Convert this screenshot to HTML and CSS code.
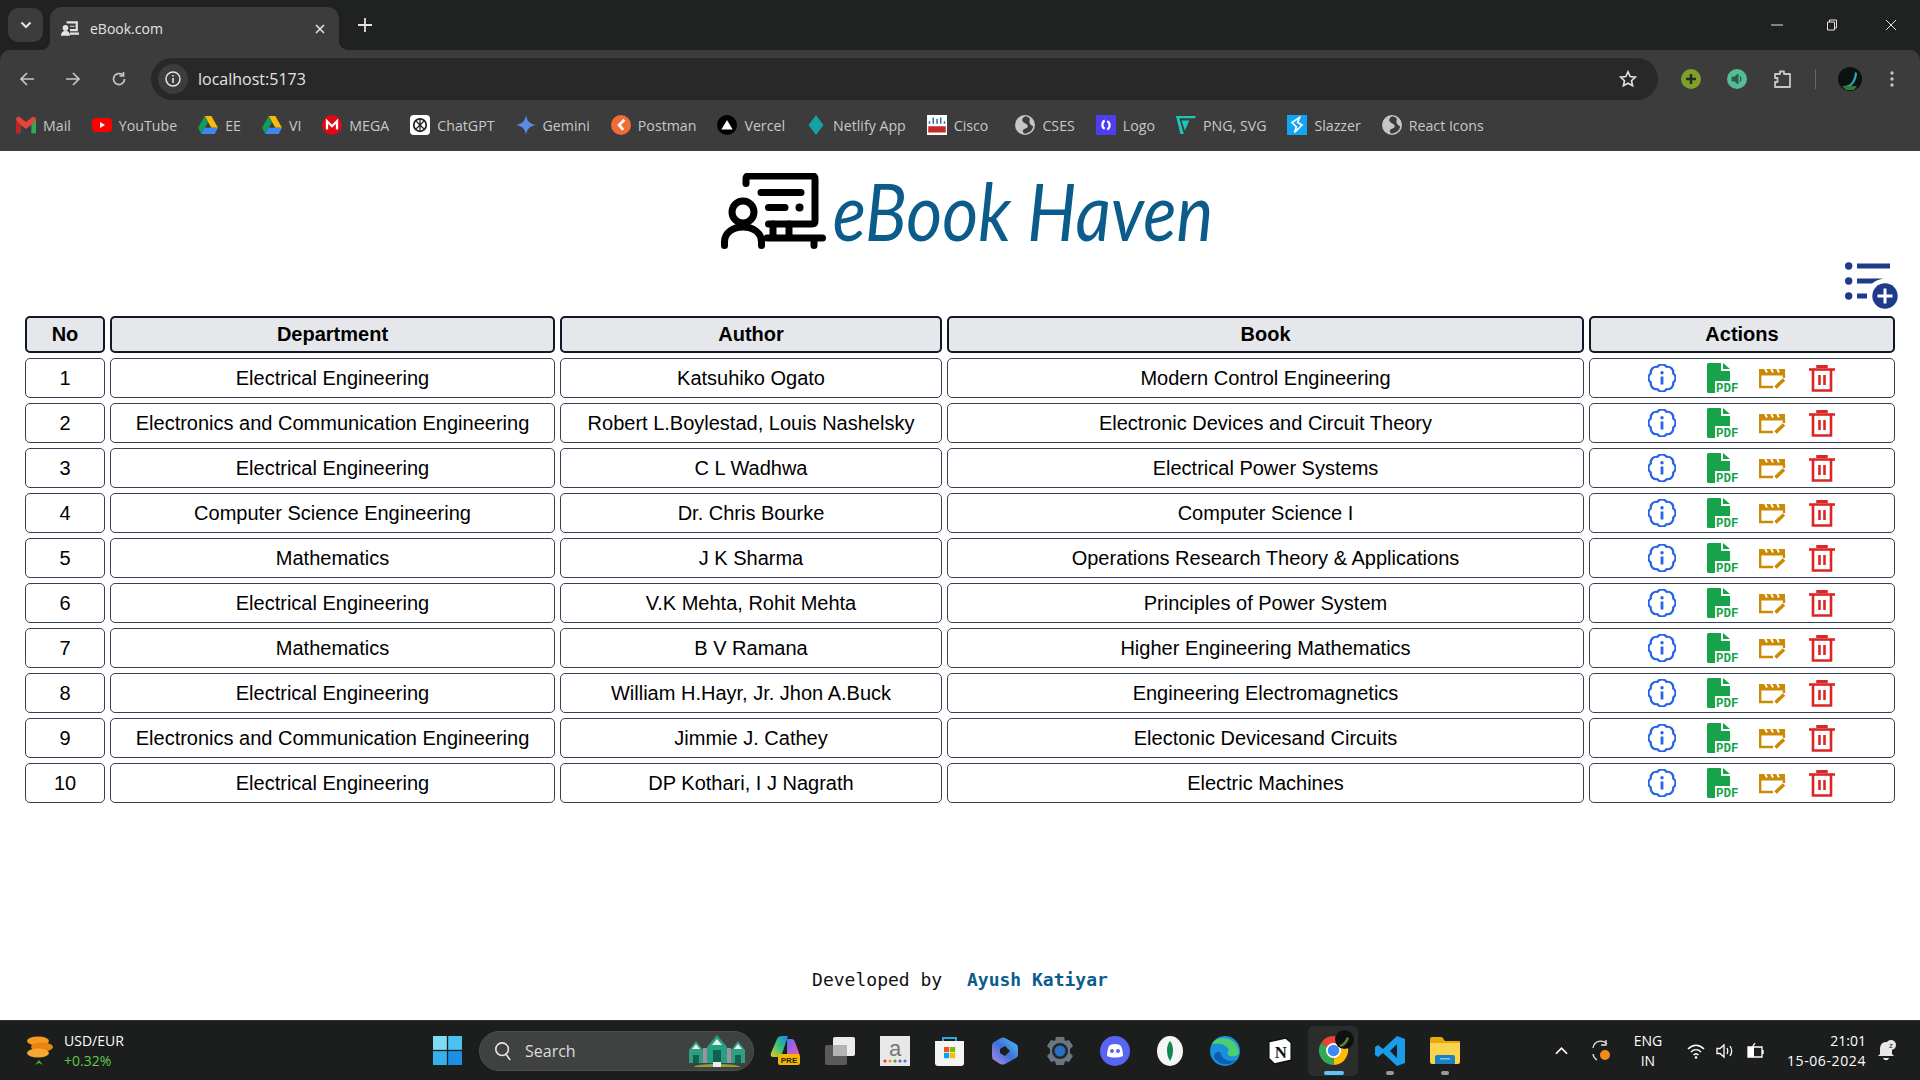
FILE: index.html
```html
<!DOCTYPE html>
<html lang="en">
<head>
    <meta charset="UTF-8">
    <title>eBook.com</title>
    <link rel="stylesheet" href="styles.css">
</head>
<body>
<svg class="sprites" width="0" height="0">
    <symbol id="i-info" viewBox="0 0 28 28">
        <path d="M25.1 9.4A5.5 5.5 0 0 0 18.6 2.9A5.5 5.5 0 0 0 9.4 2.9A5.5 5.5 0 0 0 2.9 9.4A5.5 5.5 0 0 0 2.9 18.6A5.5 5.5 0 0 0 9.4 25.1A5.5 5.5 0 0 0 18.6 25.1A5.5 5.5 0 0 0 25.1 18.6A5.5 5.5 0 0 0 25.1 9.4z" fill="none" stroke="#2563eb" stroke-width="2.2" stroke-linejoin="round"/>
        <circle cx="14" cy="8.8" r="1.7" fill="#2563eb"/>
        <rect x="12.6" y="12.5" width="2.8" height="8" fill="#2563eb"/>
    </symbol>
    <symbol id="i-edit" viewBox="0 0 28 22">
        <path d="M1.2 7V20H14M25 7V11" fill="none" stroke="#ca8a04" stroke-width="2.4"/>
        <path d="M0 2h26v6.500H0z" fill="#ca8a04"/>
        <path d="M6 1.500l2 4M12 1.500l2 4M18 1.500l2 4" stroke="#fff" stroke-width="1.800"/>
        <path d="M0 0h27v2H0z" fill="#fff"/>
        <path d="M16.500 20.500l8.500-8" stroke="#ca8a04" stroke-width="3.600"/>
    </symbol>
    <symbol id="i-trash" viewBox="0 0 26 27">
        <path d="M0 4.500h26" stroke="#dc2626" stroke-width="2.600"/>
        <path d="M8 3V.8h10V3" fill="#dc2626" stroke="#dc2626" stroke-width="1.500"/>
        <path d="M4 5v20.500h18V5" fill="none" stroke="#dc2626" stroke-width="2.600"/>
        <path d="M10.500 10v10M15.500 10v10" stroke="#dc2626" stroke-width="2.600"/>
    </symbol>
    <symbol id="i-globe" viewBox="0 0 16 16">
        <circle cx="8" cy="8" r="8" fill="#c4c7c5"/>
        <path d="M8 1C5 3 5 5 8 6.500s3 3.500 0 4.500-1.500 3.500 0 4c3-1 6-2 6.500-6C12 8 11 6 12 3 11 2 9.500 1 8 1z" fill="#3c3c3c"/>
    </symbol>
</svg>

<header class="chrome">
    <div class="tabstrip">
        <div class="tab-search"><svg width="12" height="8" viewBox="0 0 12 8"><path d="M1.500 1.500L6 6l4.500-4.500" fill="none" stroke="#e3e3e3" stroke-width="2"/></svg></div>
        <div class="tab">
            <svg width="18" height="18" viewBox="0 0 16 16"><circle cx="4" cy="7" r="2.500" fill="#e3e3e3"/><path d="M0 14c0-6 8-6 8 0zM5 1h10v9H8V8h5V3H5zM8 5h4v1H8zM8 11h8v2H8z" fill="#e3e3e3"/></svg>
            <span class="tab-title">eBook.com</span>
            <svg width="10" height="10" viewBox="0 0 10 10"><path d="M1 1l8 8M9 1L1 9" stroke="#e3e3e3" stroke-width="1.600"/></svg>
        </div>
        <svg class="new-tab" width="16" height="16" viewBox="0 0 16 16"><path d="M8 1v14M1 8h14" stroke="#e3e3e3" stroke-width="1.800"/></svg>
        <div class="win-controls">
            <svg width="12" height="12" viewBox="0 0 12 12"><path d="M0 6h12" stroke="#e3e3e3"/></svg>
            <svg width="12" height="12" viewBox="0 0 12 12"><path d="M1.500 3h7v8h-7zM3.500 3V1h7v8H8.500" fill="none" stroke="#e3e3e3"/></svg>
            <svg class="win-close" width="12" height="12" viewBox="0 0 12 12"><path d="M1 1l10 10M11 1L1 11" stroke="#e3e3e3"/></svg>
        </div>
    </div>
    <div class="toolbar">
        <svg width="16" height="16" viewBox="0 0 16 16"><path d="M15 8H2M8 2L2 8l6 6" fill="none" stroke="#c4c7c5" stroke-width="1.700"/></svg>
        <svg width="16" height="16" viewBox="0 0 16 16"><path d="M1 8h13M8 2l6 6-6 6" fill="none" stroke="#c4c7c5" stroke-width="1.700"/></svg>
        <svg width="16" height="16" viewBox="0 0 16 16"><path d="M13.500 8A5.500 5.500 0 1 1 11.500 3.800M12.500 1v4h-4" fill="none" stroke="#c4c7c5" stroke-width="1.700"/></svg>
        <div class="omnibox">
            <div class="site-info"><svg width="16" height="16" viewBox="0 0 16 16"><circle cx="8" cy="8" r="7" fill="none" stroke="#e3e3e3" stroke-width="1.500"/><path d="M8 7v5M8 4v1.600" stroke="#e3e3e3" stroke-width="1.600"/></svg></div>
            <span class="url">localhost:5173</span>
            <svg width="18" height="18" viewBox="0 0 18 18"><path d="M9 1.800l2.200 4.800 5.200.6-3.900 3.500 1.100 5.100L9 13.200l-4.600 2.600 1.100-5.100L1.600 7.200l5.200-.6z" fill="none" stroke="#e3e3e3" stroke-width="1.600"/></svg>
        </div>
        <div class="ext-icons">
            <svg width="20" height="20" viewBox="0 0 20 20"><circle cx="10" cy="10" r="10" fill="#7fa02c"/><path d="M10 5v10M5 10h10" stroke="#22301a" stroke-width="2.600"/></svg>
            <svg width="20" height="20" viewBox="0 0 20 20"><circle cx="10" cy="10" r="10" fill="#54bd95"/><path d="M5 8h2.500L11 5v10l-3.500-3H5zM13 7c1.300 1.800 1.300 4.200 0 6" fill="#2d5c4b" stroke="#2d5c4b"/></svg>
            <svg width="20" height="20" viewBox="0 0 20 20"><path d="M2 5h5V2.500h4V5h6v13H2v-5h2.500V9H2z" fill="none" stroke="#c4c7c5" stroke-width="1.800" stroke-linejoin="round"/></svg>
            <span class="toolbar-sep"></span>
            <svg width="24" height="24" viewBox="0 0 24 24"><circle cx="12" cy="12" r="12" fill="#0c1210"/><path d="M6 19c5 0 10-3 11-14l2 1c0 7-4 13-9 14z" fill="#2aa5c4"/><path d="M4 19h15l-3 4H8z" fill="#2f7d32"/></svg>
            <svg class="menu-dots" width="4" height="16" viewBox="0 0 4 16"><circle cx="2" cy="2" r="1.700" fill="#c4c7c5"/><circle cx="2" cy="8" r="1.700" fill="#c4c7c5"/><circle cx="2" cy="14" r="1.700" fill="#c4c7c5"/></svg>
        </div>
    </div>
    <nav class="bookmarks">
        <a class="bm"><svg viewBox="0 0 16 13"><path d="M0 2v10c0 .6.400 1 1 1h2.500V6L8 9.500 12.500 6v7H15c.6 0 1-.4 1-1V2L8 8z" fill="#4285f4"/><path d="M0 2c0-1.800 2-2.600 3.300-1.500L8 4l4.700-3.500C14 -.6 16 .2 16 2l-3.500 4L8 9.500 3.500 6z" fill="#ea4335"/><path d="M12.500 6V13H15c.6 0 1-.4 1-1V2z" fill="#34a853"/><path d="M0 2l3.500 4v7H1c-.6 0-1-.4-1-1z" fill="#c5221f"/></svg>Mail</a>
        <a class="bm"><svg viewBox="0 0 20 14"><rect width="20" height="14" rx="4" fill="#f00"/><path d="M8 4l5 3-5 3z" fill="#fff"/></svg>YouTube</a>
        <a class="bm"><svg viewBox="0 0 18 16"><path d="M6 0h6l6 10.500h-6z" fill="#fbbc04"/><path d="M6 0L0 10.500 3 16l6-10.500z" fill="#0f9d58"/><path d="M3 16h12l3-5.500H6z" fill="#4285f4"/></svg>EE</a>
        <a class="bm"><svg viewBox="0 0 18 16"><path d="M6 0h6l6 10.500h-6z" fill="#fbbc04"/><path d="M6 0L0 10.500 3 16l6-10.500z" fill="#0f9d58"/><path d="M3 16h12l3-5.500H6z" fill="#4285f4"/></svg>VI</a>
        <a class="bm"><svg viewBox="0 0 16 16"><circle cx="8" cy="8" r="8" fill="#e30613"/><path d="M4 11.500V5l4 4 4-4v6.500" fill="none" stroke="#fff" stroke-width="1.800"/></svg>MEGA</a>
        <a class="bm"><svg viewBox="0 0 16 16"><rect width="16" height="16" rx="3" fill="#fff"/><circle cx="8" cy="8" r="5" fill="none" stroke="#222" stroke-width="1.400"/><path d="M5 5l6 6M11 5l-6 6M8 3v10" stroke="#222"/></svg>ChatGPT</a>
        <a class="bm"><svg viewBox="0 0 16 16"><path d="M8 0c.6 4.500 3 7.300 8 8-5 .7-7.400 3.500-8 8-.6-4.500-3-7.300-8-8 5-.7 7.400-3.500 8-8z" fill="#5a8ce6"/></svg>Gemini</a>
        <a class="bm"><svg viewBox="0 0 16 16"><circle cx="8" cy="8" r="8" fill="#ef6c35"/><path d="M10 3L5 8l4 4.500 1.500-1.500L8 8l3.500-3.500z" fill="#fff"/></svg>Postman</a>
        <a class="bm"><svg viewBox="0 0 16 16"><circle cx="8" cy="8" r="8" fill="#000"/><path d="M8 4l4.500 7.500h-9z" fill="#fff"/></svg>Vercel</a>
        <a class="bm"><svg viewBox="0 0 16 16"><path d="M8 0l6 8-6 8-6-8z" fill="#14a3a1"/></svg>Netlify App</a>
        <a class="bm"><svg viewBox="0 0 16 16"><rect width="16" height="16" fill="#fff"/><path d="M2 7V5M5 7V2M8 7V3M11 7V2M14 7V5" stroke="#2a6fa8" stroke-width="1.200"/><rect x="1" y="9" width="14" height="5" fill="#c62828"/></svg>Cisco</a>
        <a class="bm bm-wide"><svg><use href="#i-globe"/></svg>CSES</a>
        <a class="bm"><svg viewBox="0 0 16 16"><rect width="16" height="16" fill="#4f3df0"/><path d="M7 4.500C4.500 5.500 4.500 10 7 11M9 5c2.500 1 2.500 5.500 0 6.500" fill="none" stroke="#fff" stroke-width="1.800"/></svg>Logo</a>
        <a class="bm"><svg viewBox="0 0 18 18"><path d="M0 1l4 16h3L3 3h14l1-2zM5 5l3 9 4-9z" fill="#1ac7b8"/></svg>PNG, SVG</a>
        <a class="bm"><svg viewBox="0 0 16 16"><rect width="16" height="16" fill="#12a5f4"/><path d="M4 6l6-4-1.500 4L12 8l-6 6 1.500-4.500z" fill="none" stroke="#fff" stroke-width="1.300"/></svg>Slazzer</a>
        <a class="bm"><svg><use href="#i-globe"/></svg>React Icons</a>
    </nav>
</header>

<main class="page">
    <div class="logo">
        <svg width="105" height="76" viewBox="0 0 105 76">
            <g fill="none" stroke="#000" stroke-width="7" stroke-linecap="round" stroke-linejoin="round">
                <path d="M25 10.500V6q0-3 3-3h63q3 0 3 3v42q0 3-3 3H47.500"/>
                <path d="M40 19.500h40M47.500 34.500H64"/>
                <circle cx="22" cy="39" r="11"/>
                <path d="M3.500 72.500V69c0-20 37-20 37 0v3.500M46 65h55.500M93 65v7.500M52 51v14M68 51v14"/>
            </g>
            <circle cx="78.500" cy="34.500" r="4" fill="#000"/>
        </svg>
        <span class="logo-text">eBook Haven</span>
    </div>

    <div class="add-row">
        <svg width="53" height="47" viewBox="0 0 53 47">
            <g fill="#1e3a8a">
                <circle cx="3.700" cy="4" r="3.700"/>
                <circle cx="3.700" cy="19" r="3.700"/>
                <circle cx="3.700" cy="34" r="3.700"/>
                <rect x="12" y="1.500" width="33" height="5"/>
                <path d="M12 16.500h26q-7 1.500-11 5H12z"/>
                <rect x="12" y="31.500" width="10" height="5"/>
                <circle cx="40" cy="34" r="12.700"/>
            </g>
            <path d="M40 26.500v15M32.500 34h15" stroke="#fff" stroke-width="3"/>
        </svg>
    </div>

    <table class="book-table">
        <colgroup>
            <col class="col-no"><col class="col-dept"><col class="col-author"><col class="col-book"><col class="col-actions">
        </colgroup>
        <thead>
            <tr><th>No</th><th>Department</th><th>Author</th><th>Book</th><th>Actions</th></tr>
        </thead>
        <tbody id="tableBody"></tbody>
    </table>

    <footer class="credit">Developed by <span class="credit-name">Ayush Katiyar</span></footer>
</main>

<footer class="taskbar">
    <div class="weather">
        <svg width="30" height="30" viewBox="0 0 30 30">
            <ellipse cx="13" cy="5" rx="11" ry="4.500" fill="#f59a23"/>
            <ellipse cx="17" cy="11" rx="11" ry="4.500" fill="#e8850f"/>
            <ellipse cx="13" cy="17" rx="11" ry="4.500" fill="#f7a733"/>
            <path d="M10 29l4-5 4 5-4-2z" fill="#4caf2a"/>
        </svg>
        <div class="weather-text"><span>USD/EUR</span><span class="weather-up">+0.32%</span></div>
    </div>
    <svg width="29" height="29" viewBox="0 0 30 30"><rect width="14.3" height="14.3" fill="#7fdcf7"/><rect x="15.7" width="14.3" height="14.3" fill="#4cc2f1"/><rect y="15.7" width="14.3" height="14.3" fill="#35b2ee"/><rect x="15.7" y="15.7" width="14.3" height="14.3" fill="#1b8fe6"/></svg>
    <div class="search-pill">
        <svg width="18" height="22" viewBox="0 0 20 22"><circle cx="9" cy="9" r="7" fill="none" stroke="#e3e3e3" stroke-width="1.800"/><path d="M13.500 15l4.500 6" stroke="#e3e3e3" stroke-width="1.800"/></svg>
        <span>Search</span>
        <svg class="search-art" width="58" height="32" viewBox="0 0 58 32">
            <path d="M1 28V15L8 6l7 9v13z" fill="#2f9e83"/>
            <path d="M43 28V15l7-9 7 9v13z" fill="#2f9e83"/>
            <rect x="15" y="13" width="28" height="15" fill="#a48f9a"/>
            <path d="M19 28V12L29 0l10 12v16z" fill="#25a085"/>
            <path d="M25 28V15h8v13zM5 28v-8h6v8zM47 28v-8h6v8z" fill="#12604f"/>
            <path d="M24 10h10l-5-6z" fill="#e8f0ec"/>
            <path d="M4 14h8l-4-5zM46 14h8l-4-5z" fill="#e8f0ec"/>
            <path d="M6 32c0-4 46-4 46 0z" fill="#8aa537"/>
            <rect x="25" y="27" width="8" height="5" fill="#eee"/>
        </svg>
    </div>
    <div class="task-apps">
        <div class="app">
            <svg width="30" height="29" viewBox="0 0 30 29">
                <defs>
                    <linearGradient id="cp-left" x1="0" y1="1" x2="1" y2="0"><stop offset="0" stop-color="#f2c81e"/><stop offset=".5" stop-color="#35c17e"/><stop offset="1" stop-color="#1e86e8"/></linearGradient>
                    <linearGradient id="cp-right" x1="0" y1="0" x2="1" y2="1"><stop offset="0" stop-color="#3d7df0"/><stop offset=".5" stop-color="#b25ddb"/><stop offset="1" stop-color="#ef5f9c"/></linearGradient>
                </defs>
                <path d="M7 3Q8 0 12 0h6L12 18q-1 3-4 3H3q-3 0-2-4z" fill="url(#cp-left)"/>
                <path d="M17 3h5q2 0 3 3l4 11q1 3-2 3h-10z" fill="url(#cp-right)"/>
                <rect x="8" y="18" width="22" height="11" rx="2" fill="#f5b800"/>
                <text x="19" y="26.500" class="pre-text">PRE</text>
            </svg>
        </div>
        <div class="app"><svg width="30" height="28" viewBox="0 0 30 28"><rect x="8" width="22" height="19" rx="2" fill="#ececec"/><rect y="8" width="22" height="20" rx="2" fill="#5a5a5a"/><rect x="8" y="8" width="14" height="11" fill="#b4b4b4"/></svg></div>
        <div class="app"><svg width="30" height="30" viewBox="0 0 30 30"><rect width="30" height="30" fill="#e8e8e8"/><text x="15" y="20" class="amazon-text">a</text><circle cx="5" cy="25" r="1.600" fill="#e33"/><circle cx="10" cy="25" r="1.600" fill="#f90"/><circle cx="15" cy="25" r="1.600" fill="#3a3"/><circle cx="20" cy="25" r="1.600" fill="#75c"/><circle cx="25" cy="25" r="1.600" fill="#38c"/></svg></div>
        <div class="app"><svg width="29" height="30" viewBox="0 0 29 30"><path d="M8 6V2h13v4" fill="none" stroke="#29a8e0" stroke-width="2"/><path d="M0 5h29v22q0 3-3 3H3q-3 0-3-3z" fill="#f4f4f4"/><rect x="9" y="11" width="5.200" height="5.200" fill="#f25022"/><rect x="15" y="11" width="5.200" height="5.200" fill="#7fba00"/><rect x="9" y="17" width="5.200" height="5.200" fill="#00a4ef"/><rect x="15" y="17" width="5.200" height="5.200" fill="#ffb900"/></svg></div>
        <div class="app">
            <svg width="26" height="28" viewBox="0 0 26 28">
                <defs><linearGradient id="m365" x1="1" y1="0" x2="0" y2="1"><stop offset="0" stop-color="#4cc6f5"/><stop offset=".5" stop-color="#3f6fd8"/><stop offset="1" stop-color="#b48be8"/></linearGradient></defs>
                <path d="M13 1l11 6q2 1 2 4v7q0 2-2 3l-11 6q-2 1-5 0l-6-4q-2-1-2-4V9q0-3 2-4l7-4q2-1 4 0z" fill="url(#m365)"/>
                <path d="M13 9l5 5-5 5-5-3v-4z" fill="#1c1e1e"/>
            </svg>
        </div>
        <div class="app"><svg width="30" height="28" viewBox="0 0 30 28"><path d="M11 0h8l1 4 4-1 4 6-3 3v4l3 3-4 6-4-1-1 4h-8l-1-4-4 1-4-6 3-3v-4L2 9l4-6 4 1z" fill="#6b7780"/><circle cx="15" cy="14" r="8" fill="#20262b"/><circle cx="15" cy="14" r="5.500" fill="#2a6fc0"/></svg></div>
        <div class="app"><svg width="30" height="30" viewBox="0 0 30 30"><circle cx="15" cy="15" r="15" fill="#5865f2"/><path d="M7 20c0-5 1-9 3-11q5-2 10 0c2 2 3 6 3 11-5 2-11 2-16 0z" fill="#fff"/><circle cx="12" cy="15" r="2" fill="#5865f2"/><circle cx="18" cy="15" r="2" fill="#5865f2"/></svg></div>
        <div class="app"><svg width="28" height="30" viewBox="0 0 28 30"><ellipse cx="14" cy="15" rx="13" ry="15" fill="#f5f5f5"/><path d="M14 5c4 4 4 14 0 20-4-6-4-16 0-20z" fill="#0f8a4e"/></svg></div>
        <div class="app"><svg width="30" height="30" viewBox="0 0 30 30"><circle cx="15" cy="15" r="15" fill="#1b90d8"/><path d="M2 8c3-8 24-10 27 8 0 4-5 5-9 4-3-1-3-4-1-6C15 6 5 8 2 8z" fill="#49cf72"/><path d="M10 16c2 8 10 11 16 8-7 7-18 5-22-3 0-4 3-6 6-5z" fill="#0d5db2"/></svg></div>
        <div class="app"><svg width="28" height="28" viewBox="0 0 30 30"><path d="M3 5l18-4 6 5v19l-18 4-6-6z" fill="#fff" stroke="#111" stroke-width="1.600"/><text x="16" y="22" class="notion-text">N</text></svg></div>
        <div class="app app-chrome">
            <svg width="36" height="36" viewBox="0 -6 36 36">
                <path d="M14.500 14.500L1.940 7.250A14.500 14.500 0 0 1 27.060 7.250z" fill="#ea4335"/>
                <path d="M14.500 14.500L27.060 7.250A14.500 14.500 0 0 1 14.500 29z" fill="#fbbc04"/>
                <path d="M14.500 14.500L14.500 29A14.500 14.500 0 0 1 1.940 7.250z" fill="#34a853"/>
                <circle cx="14.500" cy="14.500" r="7.500" fill="#fff"/>
                <circle cx="14.500" cy="14.500" r="5.800" fill="#4285f4"/>
                <circle cx="25.500" cy="3.500" r="9.500" fill="#0c1210"/>
                <path d="M20 9c4-1 6-4 8-8l2 1c-1 4-4 8-8 9z" fill="#5a7f3a"/>
            </svg>
            <span class="run-bar"></span>
        </div>
        <div class="app">
            <svg width="30" height="30" viewBox="0 0 30 30"><path d="M22 0l8 3v24l-8 3L8 17l-5 4-3-2V11l3-2 5 4zM22 8l-7 7 7 7z" fill="#1b9cea" fill-rule="evenodd"/></svg>
            <span class="run-dot"></span>
        </div>
        <div class="app">
            <svg width="30" height="27" viewBox="0 0 30 27"><path d="M0 2q0-2 2-2h10l3 4h15v10H0z" fill="#e8a90f"/><path d="M0 6h30v19q0 2-2 2H2q-2 0-2-2z" fill="#fcd34d"/><path d="M5 27V20q0-2 2-2h16q2 0 2 2v7z" fill="#1a82c4"/><rect x="10" y="21" width="10" height="1.500" fill="#7cc7ee"/></svg>
            <span class="run-dot"></span>
        </div>
    </div>
    <div class="tray">
        <svg width="13" height="9" viewBox="0 0 14 9"><path d="M1 8l6-6 6 6" fill="none" stroke="#fff" stroke-width="1.800"/></svg>
        <svg class="tray-sync" width="22" height="24" viewBox="0 0 22 24"><path d="M3 9a8 8 0 0 1 14-4M16 1v5h-5M3 15a8 8 0 0 0 4 6" fill="none" stroke="#e3e3e3" stroke-width="1.300"/><circle cx="15" cy="16" r="5" fill="#f28c18"/></svg>
        <div class="lang"><span>ENG</span><span>IN</span></div>
        <div class="tray-icons">
            <svg width="18" height="16" viewBox="0 0 18 16"><path d="M1 6c5-5 11-5 16 0M4 9c3-3 7-3 10 0M6.500 12c1.500-1.500 3.500-1.500 5 0" fill="none" stroke="#fff" stroke-width="1.500"/><circle cx="9" cy="14.500" r="1.300" fill="#fff"/></svg>
            <svg width="18" height="16" viewBox="0 0 18 16"><path d="M1 5.500h3L8 2v12l-4-3.500H1zM11 5c1 2 1 4 0 6M14 3c2 3 2 7 0 10" fill="none" stroke="#fff" stroke-width="1.300"/></svg>
            <svg width="20" height="18" viewBox="0 0 20 18"><path d="M3 5h14v10H3zM18 8v4" fill="none" stroke="#fff" stroke-width="1.300"/><path d="M3 5h6v10H3z" fill="#fff"/><path d="M10 1L6 7" stroke="#fff" stroke-width="1.300"/></svg>
        </div>
        <div class="clock"><span>21:01</span><span class="clock-date">15-06-2024</span></div>
        <svg width="20" height="22" viewBox="0 0 20 22"><path d="M10 2c4 0 6 3 6 7v5l2 2H2l2-2V9c0-4 2-7 6-7zM7 18c1 3 5 3 6 0" fill="#e8e8e8"/><circle cx="15" cy="5" r="5" fill="#e8e8e8"/><text x="15" y="8" class="zz-text">z</text></svg>
    </div>
</footer>

<script>
    const books = [
        { dept: "Electrical Engineering", author: "Katsuhiko Ogato", book: "Modern Control Engineering" },
        { dept: "Electronics and Communication Engineering", author: "Robert L.Boylestad, Louis Nashelsky", book: "Electronic Devices and Circuit Theory" },
        { dept: "Electrical Engineering", author: "C L Wadhwa", book: "Electrical Power Systems" },
        { dept: "Computer Science Engineering", author: "Dr. Chris Bourke", book: "Computer Science I" },
        { dept: "Mathematics", author: "J K Sharma", book: "Operations Research Theory &amp; Applications" },
        { dept: "Electrical Engineering", author: "V.K Mehta, Rohit Mehta", book: "Principles of Power System" },
        { dept: "Mathematics", author: "B V Ramana", book: "Higher Engineering Mathematics" },
        { dept: "Electrical Engineering", author: "William H.Hayr, Jr. Jhon A.Buck", book: "Engineering Electromagnetics" },
        { dept: "Electronics and Communication Engineering", author: "Jimmie J. Cathey", book: "Electonic Devicesand Circuits" },
        { dept: "Electrical Engineering", author: "DP Kothari, I J Nagrath", book: "Electric Machines" }
    ];

    const tableBody = document.getElementById('tableBody');
    books.forEach((entry, index) => {
        const row = document.createElement('tr');
        row.innerHTML = `
            <td>${index + 1}</td>
            <td>${entry.dept}</td>
            <td>${entry.author}</td>
            <td>${entry.book}</td>
            <td><div class="actions">
                <svg class="act-info"><use href="#i-info"/></svg>
                <svg class="act-pdf" viewBox="0 0 32 36">
                    <path d="M1.500 3H14v8h9v10H8v12H1.500A1.500 1.500 0 0 1 0 31.500v-27A1.500 1.500 0 0 1 1.500 3zM16 3l7 6h-7z" fill="#16a34a"/>
                    <text x="9" y="32.300" class="pdf-text">PDF</text>
                </svg>
                <svg class="act-edit"><use href="#i-edit"/></svg>
                <svg class="act-trash"><use href="#i-trash"/></svg>
            </div></td>`;
        tableBody.appendChild(row);
    });
</script>
</body>
</html>
```

FILE: styles.css
```css
* {
    box-sizing: border-box;
}

body {
    margin: 0;
    display: flex;
    flex-direction: column;
    height: 1080px;
    overflow: hidden;
    font-family: "Liberation Sans", Arial, sans-serif;
    background-color: #fff;
    color: #000;
}

.sprites {
    position: absolute;
}

/* Browser chrome */
.chrome {
    flex: none;
    height: 151px;
    background-color: #202222;
    color: #e3e3e3;
    font-family: "Open Sans", sans-serif;
}

.tabstrip {
    height: 50px;
    display: flex;
    align-items: flex-end;
    padding-left: 8px;
}

.tab-search {
    width: 35px;
    height: 34px;
    margin: 0 7px 8px 0;
    display: flex;
    align-items: center;
    justify-content: center;
    border-radius: 10px;
    background-color: #3c3c3c;
}

.tab {
    width: 289px;
    height: 43px;
    display: flex;
    align-items: center;
    gap: 11px;
    padding: 0 14px 0 11px;
    border-radius: 12px 12px 0 0;
    background-color: #3c3c3c;
    font-size: 14px;
    position: relative;
}

.tab::before,
.tab::after {
    content: "";
    position: absolute;
    bottom: 0;
    width: 10px;
    height: 10px;
}

.tab::before {
    left: -10px;
    background: radial-gradient(circle at 0 0, #202222 10px, #3c3c3c 10.5px);
}

.tab::after {
    right: -10px;
    background: radial-gradient(circle at 100% 0, #202222 10px, #3c3c3c 10.5px);
}

.tab-title {
    flex: 1;
}

.new-tab {
    margin: 0 0 17px 18px;
}

.win-controls {
    margin-left: auto;
    height: 50px;
    display: flex;
    align-items: center;
    gap: 43px;
    padding-right: 23px;
}

.win-close {
    margin-left: 4px;
}

.toolbar {
    height: 58px;
    display: flex;
    align-items: center;
    padding-left: 19px;
    gap: 30px;
    border-radius: 10px 10px 0 0;
    background-color: #3c3c3c;
}

.toolbar > svg {
    flex: none;
}

.omnibox {
    flex: none;
    width: 1507px;
    height: 42px;
    margin-left: -6px;
    display: flex;
    align-items: center;
    border-radius: 21px;
    background-color: #282828;
    padding: 0 21px 0 7px;
}

.site-info {
    width: 30px;
    height: 30px;
    display: flex;
    align-items: center;
    justify-content: center;
    border-radius: 50%;
    background-color: #3c3c3c;
}

.url {
    margin-left: 10px;
    font-size: 16px;
    flex: 1;
}

.ext-icons {
    display: flex;
    align-items: center;
    gap: 26px;
    margin-left: -7px;
}

.toolbar-sep {
    width: 1px;
    height: 20px;
    margin: 0 -4px;
    background-color: #666;
}

.menu-dots {
    margin-left: 2px;
}

.bookmarks {
    height: 43px;
    display: flex;
    align-items: center;
    padding: 0 0 9px 16px;
    gap: 21px;
    font-size: 14.2px;
    color: #c8c8c8;
    background-color: #3c3c3c;
}

.bm {
    display: flex;
    align-items: center;
    gap: 7px;
    white-space: nowrap;
}

.bm svg {
    width: 20px;
    height: 20px;
    flex: none;
}

.bm-wide {
    margin-left: 6px;
}

/* Page */
.page {
    flex: 1;
    display: flex;
    flex-direction: column;
    align-items: center;
    padding: 0 20px;
    background-color: #fff;
}

.logo {
    height: 90px;
    margin-top: 15px;
    padding-left: 14px;
    display: flex;
    align-items: center;
    gap: 7px;
}

.logo-text {
    display: inline-block;
    font-family: "Lato", sans-serif;
    font-style: italic;
    font-size: 69.3px;
    line-height: 90px;
    color: #0b5c8a;
    white-space: nowrap;
    transform: scaleY(1.15);
}

.add-row {
    align-self: flex-end;
    height: 49px;
    margin-top: 6px;
    padding-right: 2px;
}

.book-table {
    width: 1880px;
    table-layout: fixed;
    border-collapse: separate;
    border-spacing: 5px;
    font-size: 20px;
    text-align: center;
}

.col-no { width: 80px; }
.col-dept { width: 445px; }
.col-author { width: 382px; }
.col-book { width: 637px; }
.col-actions { width: 306px; }

.book-table th {
    height: 37px;
    padding: 0;
    border: 2px solid #111827;
    border-radius: 5px;
    background-color: #e5e7eb;
    font-weight: 700;
}

.book-table td {
    height: 40px;
    padding: 0;
    border: 1px solid #374151;
    border-radius: 5px;
}

.actions {
    display: flex;
    align-items: center;
    justify-content: center;
    height: 38px;
    padding-right: 2px;
}

.actions svg {
    flex: none;
}

.act-info { width: 28px; height: 28px; margin-right: 31px; }
.act-pdf { width: 32px; height: 36px; margin-right: 20px; }
.act-edit { width: 28px; height: 22px; margin-right: 22px; }
.act-trash { width: 26px; height: 27px; }

.pdf-text {
    font-family: "Liberation Mono", monospace;
    font-size: 12.5px;
    font-weight: 700;
    fill: #16a34a;
}

.credit {
    margin-top: auto;
    padding-bottom: 30px;
    font-family: "DejaVu Sans Mono", monospace;
    font-size: 18px;
    color: #111;
    white-space: pre-wrap;
}

.credit-name {
    margin-left: 14px;
    font-weight: 700;
    color: #0b5c8a;
}

/* Taskbar */
.taskbar {
    flex: none;
    height: 60px;
    display: flex;
    align-items: center;
    background-color: #1c1e1e;
    border-top: 1px solid #333;
    color: #fff;
    font-family: "Open Sans", sans-serif;
}

.weather {
    display: flex;
    align-items: center;
    gap: 9px;
    padding-left: 25px;
    width: 433px;
    font-size: 14px;
}

.weather-text {
    display: flex;
    flex-direction: column;
    gap: 1px;
}

.weather-up {
    color: #5fc94a;
}

.search-pill {
    width: 275px;
    height: 40px;
    margin-left: 17px;
    display: flex;
    align-items: center;
    gap: 13px;
    padding: 0 7px 0 14px;
    border-radius: 20px;
    background-color: #404242;
    border: 1px solid #4d4f4f;
    font-size: 16px;
    color: #ddd;
}

.search-art {
    margin-left: auto;
}

.task-apps {
    display: flex;
    align-items: center;
    margin-left: 3px;
}

.app {
    position: relative;
    width: 55px;
    height: 50px;
    display: flex;
    align-items: center;
    justify-content: center;
}

.app-chrome::before {
    content: "";
    position: absolute;
    top: 0;
    left: 1px;
    width: 50px;
    height: 50px;
    border-radius: 5px;
    background-color: #2b2d2d;
}

.app-chrome svg {
    position: relative;
    margin: -6px 0 0 5px;
}

.run-bar {
    position: absolute;
    bottom: 1px;
    left: 17px;
    width: 20px;
    height: 4px;
    border-radius: 2px;
    background-color: #5ec5f5;
}

.run-dot {
    position: absolute;
    bottom: 1px;
    left: 24px;
    width: 8px;
    height: 4px;
    border-radius: 2px;
    background-color: #9a9a9a;
}

.pre-text {
    font-family: "Liberation Sans", sans-serif;
    font-size: 8px;
    font-weight: 700;
    text-anchor: middle;
    fill: #222;
}

.amazon-text {
    font-family: "Liberation Sans", sans-serif;
    font-size: 22px;
    text-anchor: middle;
    fill: #777;
}

.notion-text {
    font-family: "Liberation Serif", serif;
    font-size: 18px;
    font-weight: 700;
    text-anchor: middle;
    fill: #111;
}

.zz-text {
    font-family: "Liberation Sans", sans-serif;
    font-size: 8px;
    text-anchor: middle;
    fill: #222;
}

.tray {
    margin-left: auto;
    display: flex;
    align-items: center;
    padding-right: 24px;
    font-size: 14px;
}

.tray-sync {
    margin-left: 22px;
}

.lang {
    width: 30px;
    display: flex;
    flex-direction: column;
    align-items: center;
    gap: 1px;
    margin: 0 24px 0 21px;
}

.tray-icons {
    display: flex;
    align-items: center;
    gap: 11px;
}

.clock {
    display: flex;
    flex-direction: column;
    align-items: flex-end;
    gap: 1px;
    margin: 0 10px 0 22px;
    white-space: nowrap;
}

.clock-date {
    letter-spacing: 0.6px;
}
```
